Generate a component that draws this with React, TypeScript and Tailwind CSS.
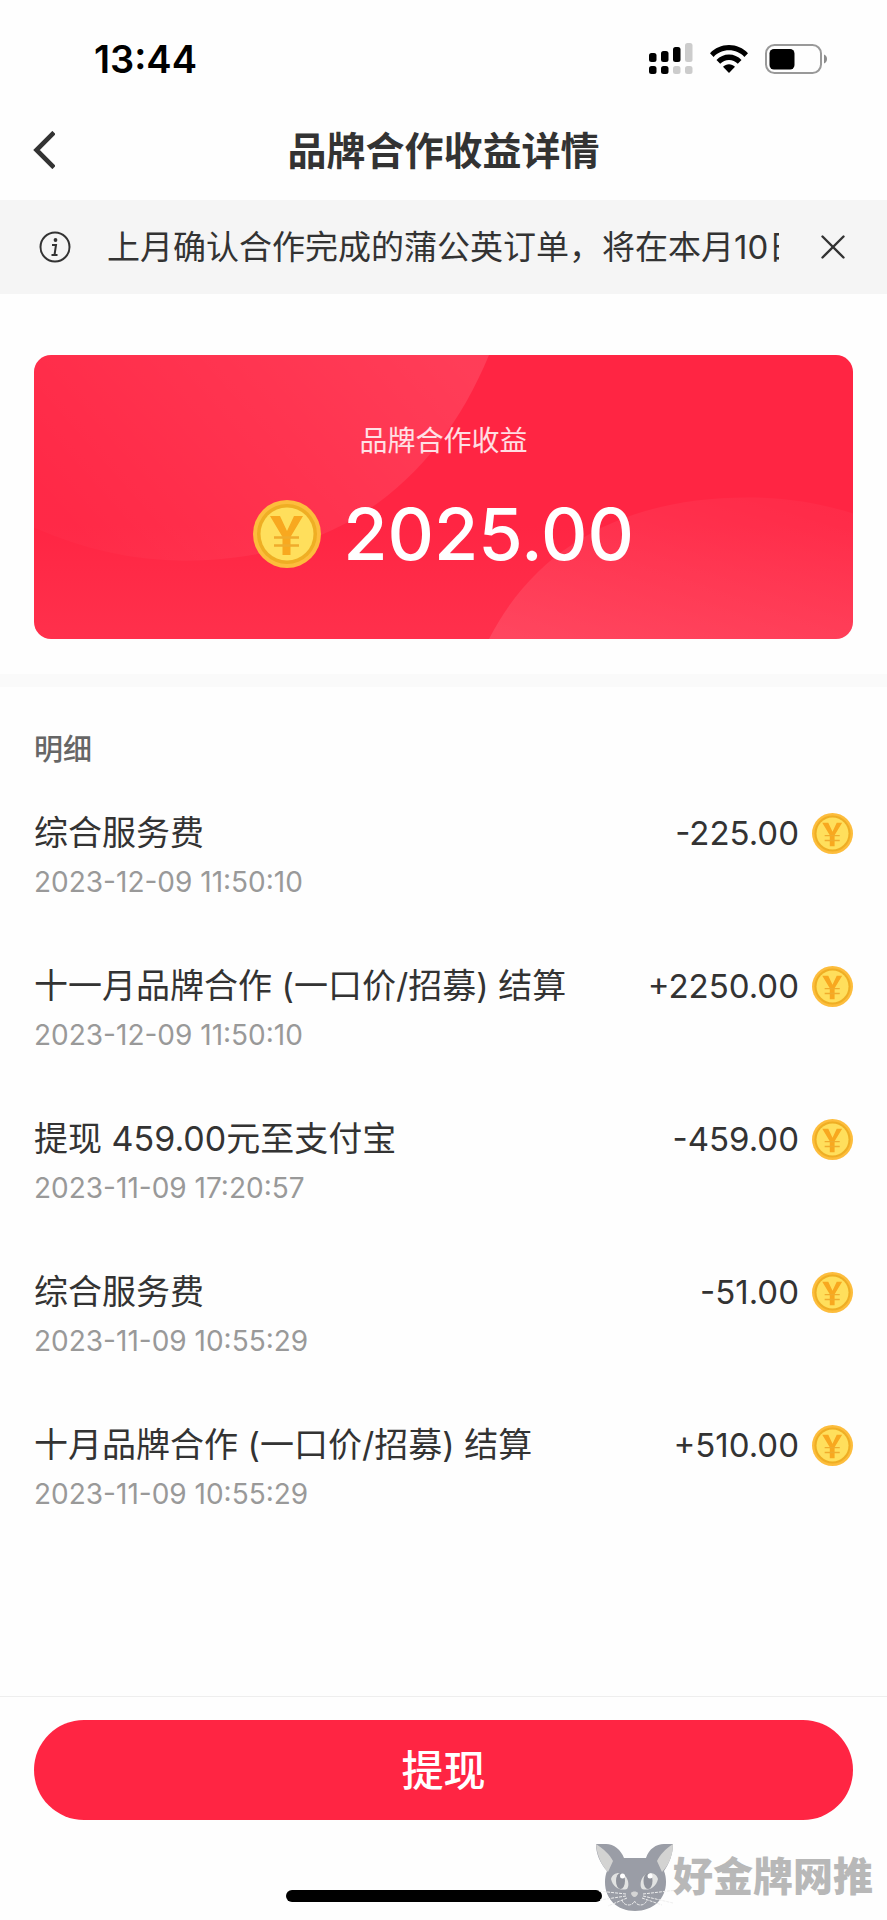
type Entry = { title: string; time: string; amount: string };

const entries: Entry[] = [
  { title: '综合服务费', time: '2023-12-09 11:50:10', amount: '-225.00' },
  { title: '十一月品牌合作 (一口价/招募) 结算', time: '2023-12-09 11:50:10', amount: '+2250.00' },
  { title: '提现 459.00元至支付宝', time: '2023-11-09 17:20:57', amount: '-459.00' },
  { title: '综合服务费', time: '2023-11-09 10:55:29', amount: '-51.00' },
  { title: '十月品牌合作 (一口价/招募) 结算', time: '2023-11-09 10:55:29', amount: '+510.00' },
];

function Coin({ className }: { className: string }) {
  return (
    <svg viewBox="0 0 68 68" className={className} aria-hidden="true">
      <circle cx="34" cy="34" r="34" fill="#fdbd3c" />
      <circle cx="34" cy="34" r="30" fill="#efae24" />
      <circle cx="34" cy="34" r="26.500" fill="#ffdf5c" />
      <path d="M17 16h10l7 15 7-15h9L37.500 37v18h-8V37z" fill="#f8a81f" />
      <path d="M21 37.500h25M21 45.500h25" stroke="#f0ac2c" strokeWidth="2.400" />
    </svg>
  );
}

function Signal() {
  return (
    <svg viewBox="0 0 44 32" className="h-8 w-11" aria-hidden="true">
      <g fill="#000">
        <rect x="0" y="10" width="7.500" height="9" rx="2.500" />
        <rect x="12" y="8" width="7.500" height="11" rx="2.500" />
        <rect x="24" y="4" width="7.500" height="15" rx="2.500" />
        <rect x="0" y="23" width="7.500" height="8" rx="2.500" />
        <rect x="12" y="23" width="7.500" height="8" rx="2.500" />
      </g>
      <g fill="#ccc">
        <rect x="36" y="0" width="7.500" height="19" rx="2.500" />
        <rect x="24" y="23" width="7.500" height="8" rx="2.500" />
        <rect x="36" y="23" width="7.500" height="8" rx="2.500" />
      </g>
    </svg>
  );
}

function Wifi() {
  return (
    <svg viewBox="0 0 38 28" className="h-7 w-[38px]" aria-hidden="true">
      <path d="M0 8.200C5 3 11.500 0 19 0s14 3 19 8.200l-3.600 3.700C30.300 7.700 25 5.300 19 5.300S7.700 7.700 3.600 11.900z" />
      <path d="M6.500 15C10 11.500 14.200 9.600 19 9.600s9 1.900 12.500 5.400l-3.700 3.800C25.400 16.400 22.400 15 19 15s-6.400 1.400-8.800 3.800z" />
      <path d="M13 21.800c1.700-1.600 3.700-2.500 6-2.500s4.300.9 6 2.500L19 28z" />
    </svg>
  );
}

function Battery() {
  return (
    <svg viewBox="0 0 63 30" className="h-[30px] w-[63px]" aria-hidden="true">
      <rect x="1" y="1" width="55" height="28" rx="8.500" fill="none" stroke="#999" strokeWidth="2" />
      <rect x="4.500" y="5" width="25" height="20.500" rx="4.500" />
      <path d="M59 10.500c2 .6 3 2.300 3 4.500s-1 3.900-3 4.500z" fill="#8c8c8c" />
    </svg>
  );
}

function CatLogo() {
  return (
    <svg viewBox="0 0 88 68" className="h-[68px] w-[88px]" aria-hidden="true">
      <path d="M0 1h10c8 0 15 6 18 14h22C53 6 60 1 68 1h9c0 10-4 20-9 27 1.500 4 2 7 2 11 0 17-13 29-31 29S9 56 9 39c0-4 .5-7 2-11C4 20 0 11 0 1z" fill="#9a9da6" />
      <path d="M0 1c8 5 14 11 17 17l-5 11C5 22 1 12 0 1zM77 1c-8 5-13 11-16 17l5 11C73 22 77 12 77 1z" fill="#d3d3d2" />
      <path d="M15 36c2-7 11-8 15-2 3 4 3 10 1 12-6 2-14-1-16-10zM62 36c-2-7-11-8-15-2-3 4-3 10-1 12 6 2 14-1 16-10z" fill="#e2e3e2" />
      <ellipse cx="24.500" cy="38" rx="4.500" ry="8" fill="#8f929b" />
      <ellipse cx="52" cy="38" rx="4.500" ry="8" fill="#8f929b" />
      <circle cx="26.500" cy="33" r="2.500" fill="#fff" />
      <circle cx="54" cy="33" r="2.500" fill="#fff" />
      <path d="M35 50c1-2 6-2 7 0 0 2-2 4-3.500 4S35 52 35 50z" fill="#d5d5d5" />
      <path d="M26 57c2 7 11 6 12.500 1 2 5 10 6 12.500-1M30 51L2 48M30 53L4 57M31 55L12 63M47 51l34-4M47 53l30 7M46 55l20 7" fill="none" stroke="#eee" strokeWidth="1" strokeDasharray="3 1" />
    </svg>
  );
}

function EarningsCard() {
  return (
    <section className="relative mx-[34px] mt-[61px] overflow-hidden rounded-[17px] bg-linear-to-b from-[#ff2543] from-60% to-[#ff304c] text-white">
      <svg viewBox="0 0 819 283" preserveAspectRatio="none" className="absolute inset-0 h-full w-full" aria-hidden="true">
        <defs>
          <linearGradient id="top" x1="0" y1="0.600" x2="1" y2="0.200">
            <stop offset="0" stopColor="#fff" stopOpacity="0.020" />
            <stop offset="1" stopColor="#fff" stopOpacity="0.110" />
          </linearGradient>
          <linearGradient id="bottom" x1="0" y1="1" x2="0.800" y2="0">
            <stop offset="0" stopColor="#fff" stopOpacity="0.110" />
            <stop offset="1" stopColor="#fff" stopOpacity="0.030" />
          </linearGradient>
        </defs>
        <path d="M0 172C50 194 100 205 150 205 310 205 405 120 455 0H0z" fill="url(#top)" />
        <path d="M455 283C505 185 600 142 713 142c37 0 72 5 106 16v125z" fill="url(#bottom)" />
      </svg>
      <div className="relative flex flex-col items-center pt-[66px] pb-[61px]">
        <h2 className="text-[28px] leading-10 text-white/85">品牌合作收益</h2>
        <p className="mt-[29px] flex items-center gap-[22px] text-[72px] leading-[88px] font-medium">
          <Coin className="size-[68px]" />
          2025.00
        </p>
      </div>
    </section>
  );
}

export default function App() {
  return (
    <div
      lang="zh-CN"
      className="relative flex min-h-screen flex-col overflow-hidden bg-[#fefefe] font-['Inter','Noto_Sans_CJK_SC',sans-serif] text-[#333]"
    >
      <div className="flex h-[100px] items-center justify-between pt-[18px] pr-[59px] pl-[94px] text-black">
        <span className="text-[38px] leading-none font-semibold">13:44</span>
        <div className="flex items-center">
          <Signal />
          <span className="ml-[17px]"><Wifi /></span>
          <span className="ml-[17px]"><Battery /></span>
        </div>
      </div>

      <header className="grid h-[100px] grid-cols-[1fr_auto_1fr] items-center px-[33px]">
        <button type="button" aria-label="返回" className="justify-self-start">
          <svg viewBox="0 0 22 38" className="h-[38px] w-[22px]" fill="none" stroke="#333" strokeWidth="4.600">
            <path d="M21 1.500L3.500 19 21 36.500" />
          </svg>
        </button>
        <h1 className="text-[39px] leading-none font-bold">品牌合作收益详情</h1>
      </header>

      <aside className="flex h-[94px] items-center bg-[#f5f5f5] pr-[42px] pl-[39px]">
        <svg viewBox="0 0 32 32" className="size-8 shrink-0" aria-hidden="true">
          <circle cx="16" cy="16" r="14.500" fill="none" stroke="#333" strokeWidth="2" />
          <circle cx="16.500" cy="9" r="1.900" fill="#333" />
          <path d="M13 14h4l-1.500 10M12.500 24h6" fill="none" stroke="#333" strokeWidth="2" />
        </svg>
        <p className="ml-9 min-w-0 flex-1 overflow-hidden text-[33px] leading-[48px] whitespace-nowrap">
          上月确认合作完成的蒲公英订单，将在本月10日
        </p>
        <button type="button" aria-label="关闭" className="ml-[42px] shrink-0">
          <svg viewBox="0 0 24 24" className="size-6" fill="none" stroke="#333" strokeWidth="2.400" strokeLinecap="round">
            <path d="M1.500 1.500l21 21M22.500 1.500l-21 21" />
          </svg>
        </button>
      </aside>

      <main className="flex-1">
        <EarningsCard />
        <div className="mt-[35px] h-[13px] bg-[#fafafa]" />
        <section className="px-[34px] pt-[43px]">
          <h2 className="text-[29px] leading-10 font-medium text-[#666]">明细</h2>
          <ul className="mt-[39px] flex flex-col gap-[62px]">
            {entries.map((entry) => (
              <li key={entry.title + entry.time} className="flex items-start justify-between">
                <div>
                  <h3 className="text-[34px] leading-[48px]">{entry.title}</h3>
                  <time className="mt-[7px] block text-[28px] leading-9 text-[#999]">{entry.time}</time>
                </div>
                <p className="flex items-center gap-[13px] text-[33px] leading-[48px]">
                  {entry.amount}
                  <Coin className="size-[41px]" />
                </p>
              </li>
            ))}
          </ul>
        </section>
      </main>

      <footer className="border-t border-[#eee] pt-[23px] pb-[18px]">
        <div className="px-[34px]">
          <button type="button" className="h-[100px] w-full rounded-full bg-[#ff2543] text-[42px] font-medium text-white">
            提现
          </button>
        </div>
        <div className="mx-auto mt-[70px] h-3 w-[316px] rounded-full bg-black" />
      </footer>

      <div className="absolute right-[14px] bottom-[9px] flex items-center">
        <CatLogo />
        <span className="-ml-[11px] text-[40px] leading-none font-black text-[#b8b8b8]">好金牌网推</span>
      </div>
    </div>
  );
}
